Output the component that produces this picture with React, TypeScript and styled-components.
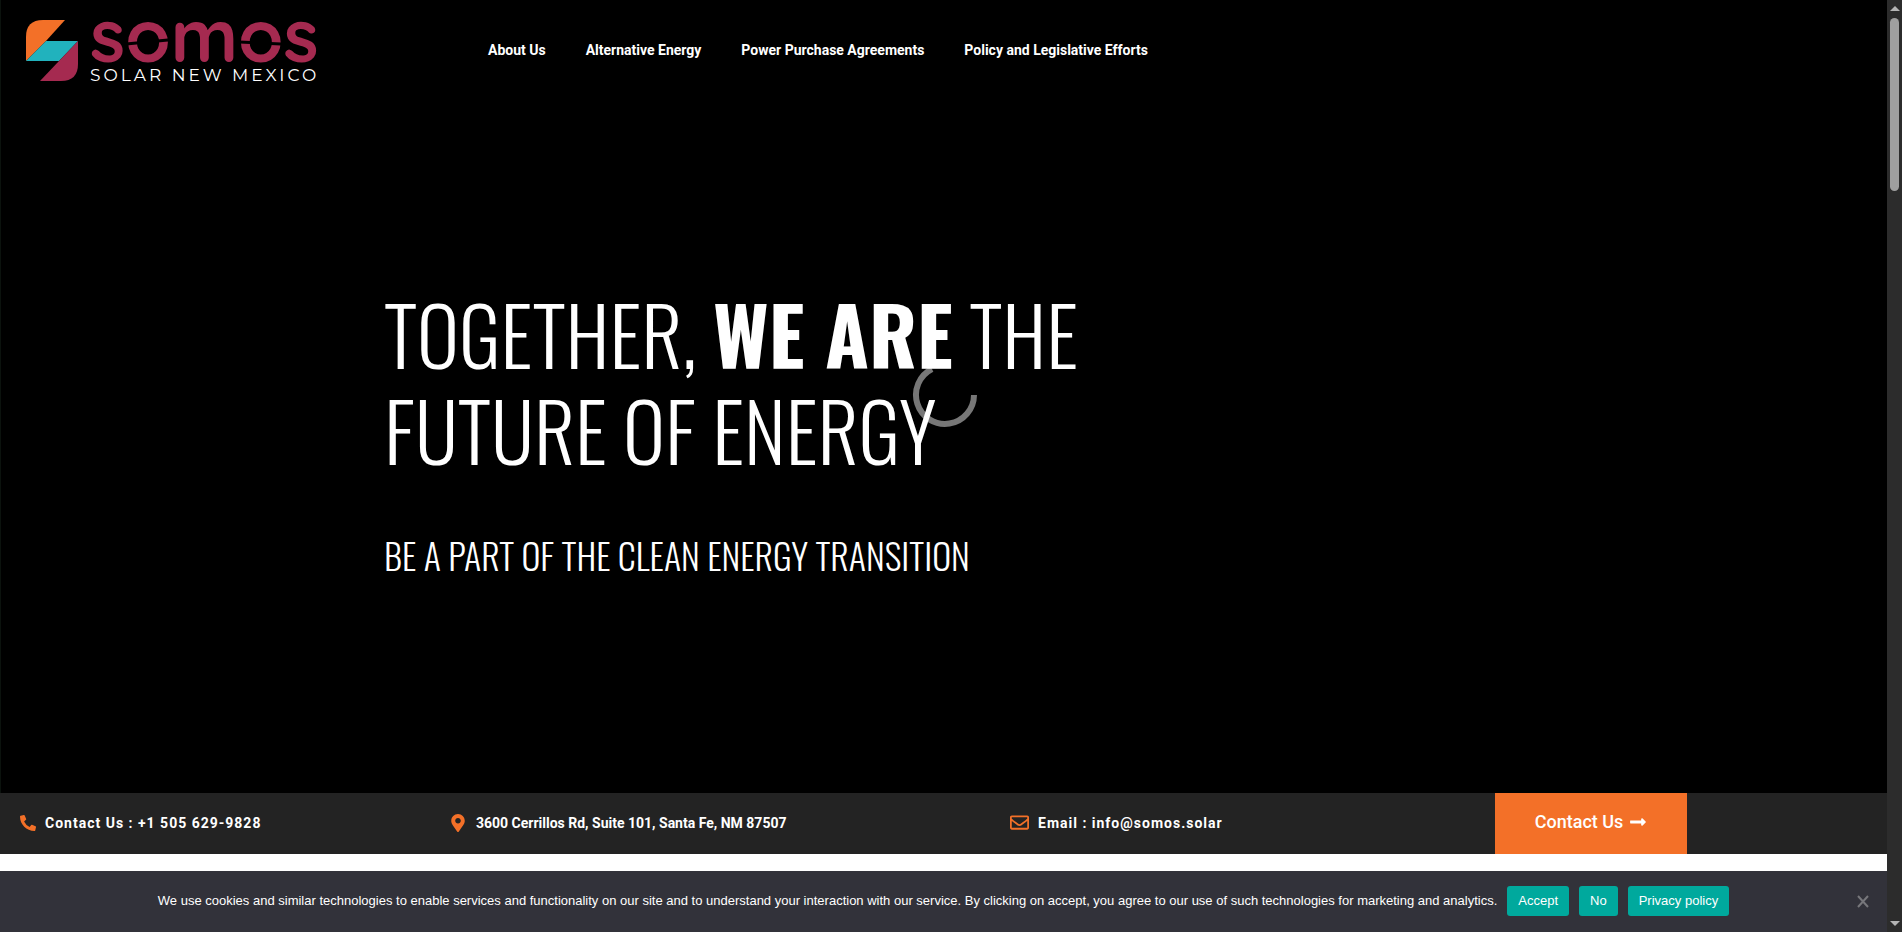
import React from "react";
import styled, { createGlobalStyle } from "styled-components";
import { FaPhoneAlt, FaMapMarkerAlt, FaRegEnvelope, FaLongArrowAltRight } from "react-icons/fa";

const GlobalStyle = createGlobalStyle`
  * { box-sizing: border-box; }
  body { margin: 0; background: #fff; font-family: Roboto, "Liberation Sans", sans-serif; }
  a { color: inherit; text-decoration: none; }
`;

const Shell = styled.div`
  display: grid;
  grid-template-columns: minmax(0, 1fr) 15px;
  min-height: 100vh;
`;

const Page = styled.div`
  display: flex;
  flex-direction: column;
`;

const Hero = styled.div`
  position: relative;
  flex: 1;
  background: #000;
  border-left: 1px solid #0b120d;
`;

const Header = styled.header`
  display: flex;
  align-items: center;
  height: 100px;
  padding-left: 24px;
`;

const Brand = styled.a`
  display: block;
  width: 463px;

  svg { display: block; overflow: visible; }
`;

const Nav = styled.nav`
  display: flex;
  gap: 40px;
  font-size: 14px;
  line-height: 20px;
  font-weight: 700;
  color: #fff;
  white-space: nowrap;
`;

const Banner = styled.main`
  position: relative;
  z-index: 1;
  padding: 185px 0 0 383px;
  font-family: Oswald, "Roboto Condensed", sans-serif;
  font-weight: 300;
  color: #fff;
  text-transform: uppercase;
`;

const Title = styled.h1`
  margin: 0;
  font-size: 80px;
  line-height: 96px;
  font-weight: 300;
  white-space: nowrap;

  strong { font-weight: 700; }
`;

const Subtitle = styled.p`
  margin: 48px 0 0;
  font-size: 36px;
  line-height: 60px;
  white-space: nowrap;
`;

const Spinner = styled.svg`
  position: absolute;
  left: 50%;
  top: 50%;
  width: 66px;
  height: 66px;
  margin: -35px 0 0 -32px;
`;

const InfoBar = styled.footer`
  display: grid;
  grid-template-columns: 429fr 561fr 505fr 392fr;
  height: 61px;
  background: #232323;
`;

const InfoItem = styled.a<{ $spaced?: boolean }>`
  display: flex;
  align-items: center;
  gap: 9px;
  padding: 0 0 2px 20px;
  font-size: 14px;
  line-height: 20px;
  font-weight: 700;
  letter-spacing: ${(p) => (p.$spaced ? "1px" : "normal")};
  color: #fff;
  white-space: nowrap;

  svg { flex: none; color: #f37028; }
`;

const ContactButton = styled.button`
  display: flex;
  align-items: center;
  justify-content: center;
  gap: 6px;
  width: 192px;
  padding: 0 0 4px;
  border: 0;
  background: #f37028;
  color: #fff;
  font: 500 18px/24px Roboto, sans-serif;
`;

const Gap = styled.div`
  height: 17px;
  background: #fff;
`;

const CookieBar = styled.section`
  position: relative;
  display: flex;
  align-items: center;
  justify-content: center;
  gap: 10px;
  height: 61px;
  padding-bottom: 2px;
  background: #32323a;
  color: #fff;
  font: 13px/20px "Liberation Sans", Arial, sans-serif;
  white-space: nowrap;
`;

const CookieButton = styled.button`
  height: 30px;
  padding: 0 11px;
  border: 0;
  border-radius: 3px;
  background: #00a99d;
  color: #fff;
  font: inherit;
`;

const CloseButton = styled.button`
  position: absolute;
  right: 17px;
  top: 23px;
  width: 14px;
  height: 14px;
  padding: 0;
  border: 0;
  background: none;
  color: #77777b;

  svg { display: block; }
`;

const Track = styled.div`
  display: flex;
  flex-direction: column;
  align-items: center;
  padding: 6px 0;
  background: #2c2c2c;
`;

const Thumb = styled.div`
  width: 9px;
  height: 173px;
  margin: 7px 0 auto;
  border-radius: 5px;
  background: #9f9f9f;
`;

const Logo = () => (
  <svg width="292" height="66" viewBox="25 17 292 66" role="img" aria-label="Somos Solar New Mexico">
    <path d="M26 61V37Q26 20 43 20H65L46 41Z" fill="#f37028" />
    <path d="M26 61L46 41H78L59 61Z" fill="#21b2bd" />
    <path d="M78 41V64Q78 81 61 81H40L59 61Z" fill="#a52a50" />
    <text x="90" y="62" fontFamily="Quicksand, Lato, sans-serif" fontSize="73" fontWeight="700" fill="#a52a50">somos</text>
    <path d="M126 44L168 40M239 42L281 44" stroke="#000" strokeWidth="3" />
    <text x="90" y="81" fontFamily="Montserrat, Lato, sans-serif" fontSize="17" letterSpacing="3" fill="#fff">SOLAR NEW MEXICO</text>
  </svg>
);

const navLinks = ["About Us", "Alternative Energy", "Power Purchase Agreements", "Policy and Legislative Efforts"];

export default function App() {
  return (
    <>
      <GlobalStyle />
      <Shell>
        <Page>
          <Hero>
            <Header>
              <Brand href="#"><Logo /></Brand>
              <Nav>{navLinks.map((t) => <a href="#" key={t}>{t}</a>)}</Nav>
            </Header>
            <Banner>
              <Title>Together, <strong>we are</strong> the<br />future of energy</Title>
              <Subtitle>Be a part of the clean energy transition</Subtitle>
            </Banner>
            <Spinner viewBox="0 0 66 66" aria-hidden="true">
              <path d="M62 33A29 29 0 1 1 20 7" fill="none" stroke="#777" strokeWidth="6" />
            </Spinner>
          </Hero>
          <InfoBar>
            <InfoItem href="#" $spaced><FaPhoneAlt size={16} />Contact Us : +1 505 629-9828</InfoItem>
            <InfoItem href="#"><FaMapMarkerAlt size={18} />3600 Cerrillos Rd, Suite 101, Santa Fe, NM 87507</InfoItem>
            <InfoItem href="#" $spaced><FaRegEnvelope size={19} />Email : info@somos.solar</InfoItem>
            <ContactButton>Contact Us<FaLongArrowAltRight size={18} /></ContactButton>
          </InfoBar>
          <Gap />
          <CookieBar aria-label="Cookie notice">
            <span>We use cookies and similar technologies to enable services and functionality on our site and to understand your interaction with our service. By clicking on accept, you agree to our use of such technologies for marketing and analytics.</span>
            <CookieButton>Accept</CookieButton>
            <CookieButton>No</CookieButton>
            <CookieButton>Privacy policy</CookieButton>
            <CloseButton aria-label="Close">
              <svg width="14" height="14" viewBox="0 0 14 14"><path d="M2 2L12 13M12 2L2 13" stroke="currentColor" strokeWidth="2" /></svg>
            </CloseButton>
          </CookieBar>
        </Page>
        <Track aria-hidden="true">
          <svg width="10" height="5"><path d="M0 5L5 0L10 5Z" fill="#b5b5b5" /></svg>
          <Thumb />
          <svg width="10" height="5"><path d="M0 0L5 5L10 0Z" fill="#b5b5b5" /></svg>
        </Track>
      </Shell>
    </>
  );
}
